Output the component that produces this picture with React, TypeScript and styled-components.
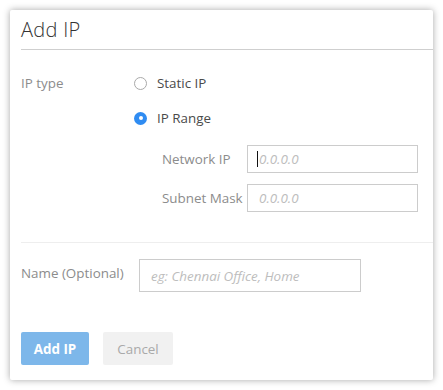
import React from "react";
import styled, { createGlobalStyle } from "styled-components";

const Global = createGlobalStyle`
  html, body { margin: 0; padding: 0; background: #fff; }
  body { font-family: "Open Sans", "Liberation Sans", sans-serif; }
  * { box-sizing: border-box; }
`;

const Page = styled.div`
  padding: 10px;
`;

const Card = styled.div`
  width: 423px;
  height: 370px;
  background: #fff;
  border-radius: 2px;
  box-shadow: 0 0 7px rgba(0, 0, 0, 0.35);
  padding-left: 11px;
  display: flex;
  flex-direction: column;
`;

const Header = styled.div`
  height: 40px;
  border-bottom: 1px solid #cfcfcf;
  display: flex;
  align-items: center;
`;

const Title = styled.h1`
  margin: 0;
  font-size: 20px;
  font-weight: 300;
  color: #333;
  letter-spacing: 0.3px;
`;

const Section = styled.div<{ $pt: number; $pb: number; $line?: boolean }>`
  padding-top: ${(p) => p.$pt}px;
  padding-bottom: ${(p) => p.$pb}px;
  border-bottom: ${(p) => (p.$line ? "1px solid #eeeeee" : "none")};
  display: flex;
  flex-direction: column;
`;

const Row = styled.div<{ $labelW: number }>`
  display: grid;
  grid-template-columns: ${(p) => p.$labelW}px auto;
  align-items: start;
`;

const Label = styled.div<{ $h: number }>`
  font-size: 13.4px;
  color: #8c8c8c;
  line-height: ${(p) => p.$h}px;
`;

const Options = styled.div`
  display: flex;
  flex-direction: column;
  gap: 15px;
`;

const RadioRow = styled.label`
  display: flex;
  align-items: center;
  height: 20px;
  font-size: 13.4px;
  color: #4a4a4a;
  gap: 10px;
`;

const RadioDot = styled.span<{ $on?: boolean }>`
  width: 13px;
  height: 13px;
  border-radius: 50%;
  border: ${(p) => (p.$on ? "none" : "1px solid #a9a9a9")};
  background: ${(p) => (p.$on ? "#2f8cf2" : "#fff")};
  display: flex;
  align-items: center;
  justify-content: center;
  &::after {
    content: "";
    display: ${(p) => (p.$on ? "block" : "none")};
    width: 4px;
    height: 4px;
    border-radius: 50%;
    background: #fff;
  }
`;

const SubFields = styled.div`
  margin-top: 17px;
  margin-left: 141px;
  display: flex;
  flex-direction: column;
  gap: 11px;
`;

const FieldWrap = styled.div<{ $w: number; $h: number }>`
  position: relative;
  width: ${(p) => p.$w}px;
  height: ${(p) => p.$h}px;
`;

const Input = styled.input`
  width: 100%;
  height: 100%;
  border: 1px solid #cccccc;
  border-radius: 0;
  padding: 0 11px;
  font-family: inherit;
  font-size: 13.4px;
  outline: none;
  color: #333;
  &::placeholder {
    color: #bdbdbd;
    font-style: italic;
  }
`;

const Caret = styled.span`
  position: absolute;
  left: 10px;
  top: 6px;
  width: 1px;
  height: 16px;
  background: #111;
`;

const Buttons = styled.div`
  margin-top: 40px;
  display: flex;
  gap: 14px;
`;

const Button = styled.button<{ $primary?: boolean; $w: number }>`
  width: ${(p) => p.$w}px;
  height: 33px;
  padding: 0;
  border: none;
  border-radius: 2px;
  font-family: inherit;
  font-size: 13.4px;
  font-weight: ${(p) => (p.$primary ? 700 : 400)};
  background: ${(p) => (p.$primary ? "#7db7ea" : "#f1f1f1")};
  color: ${(p) => (p.$primary ? "#fff" : "#a9a9a9")};
`;

export default function App() {
  return (
    <>
      <Global />
      <Page>
        <Card>
          <Header>
            <Title>Add IP</Title>
          </Header>
          <Section $pt={23} $pb={30} $line>
            <Row $labelW={113}>
              <Label $h={20}>IP type</Label>
              <Options>
                <RadioRow>
                  <RadioDot />
                  Static IP
                </RadioRow>
                <RadioRow>
                  <RadioDot $on />
                  IP Range
                </RadioRow>
              </Options>
            </Row>
            <SubFields>
              <Row $labelW={85}>
                <Label $h={28}>Network IP</Label>
                <FieldWrap $w={171} $h={28}>
                  <Input placeholder="0.0.0.0" />
                  <Caret />
                </FieldWrap>
              </Row>
              <Row $labelW={85}>
                <Label $h={28}>Subnet Mask</Label>
                <FieldWrap $w={171} $h={28}>
                  <Input placeholder="0.0.0.0" />
                </FieldWrap>
              </Row>
            </SubFields>
          </Section>
          <Section $pt={16} $pb={0}>
            <Row $labelW={118}>
              <Label $h={28}>Name (Optional)</Label>
              <FieldWrap $w={222} $h={33}>
                <Input placeholder="eg: Chennai Office, Home" />
              </FieldWrap>
            </Row>
            <Buttons>
              <Button $primary $w={68}>Add IP</Button>
              <Button $w={70}>Cancel</Button>
            </Buttons>
          </Section>
        </Card>
      </Page>
    </>
  );
}
